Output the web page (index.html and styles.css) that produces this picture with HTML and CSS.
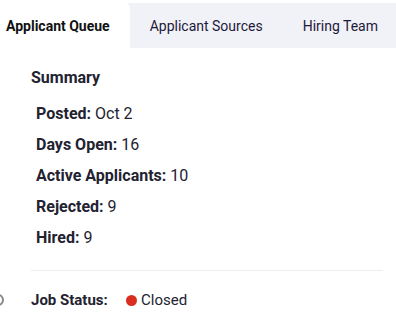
FILE: index.html
```html
<!DOCTYPE html>
<html lang="en">
<head>
    <meta charset="UTF-8">
    <title>Job Summary</title>
    <link rel="stylesheet" href="styles.css">
</head>
<body>
    <div class="tabs">
        <div class="tab active">Applicant Queue</div>
        <div class="tab">Applicant Sources</div>
        <div class="tab">Hiring Team</div>
    </div>

    <div class="panel">
        <h2 class="title">Summary</h2>
        <ul class="stats">
            <li><b>Posted:</b> Oct 2</li>
            <li><b>Days Open:</b> 16</li>
            <li><b>Active Applicants:</b> 10</li>
            <li><b>Rejected:</b> 9</li>
            <li><b>Hired:</b> 9</li>
        </ul>
        <div class="status-row">
            <span class="edge-icon"></span>
            <b class="status-label">Job Status:</b>
            <span class="status"><span class="dot"></span>Closed</span>
        </div>
    </div>
</body>
</html>
```

FILE: styles.css
```css
* {
    margin: 0;
    padding: 0;
    box-sizing: border-box;
}

body {
    font-family: Roboto, "Noto Sans", sans-serif;
    color: #222230;
    background: #fff;
    overflow: hidden;
}

.tabs {
    margin-top: 3px;
    height: 45px;
    display: flex;
    background: #f1f1f8;
    font-size: 14px;
    color: #1c1a3a;
    white-space: nowrap;
}

.tab {
    display: flex;
    align-items: center;
    padding: 0 0 0 20px;
}

.tab + .tab + .tab {
    padding-left: 40px;
}

.tab.active {
    background: #fff;
    font-weight: 700;
    color: #111;
    padding: 0 20px 0 6px;
    border-top-right-radius: 5px;
}

.panel {
    padding: 21px 13px 0 31px;
}

.title {
    font-size: 16px;
    font-weight: 700;
    line-height: 18px;
    margin-bottom: 18px;
}

.stats {
    list-style: none;
    padding-left: 5px;
    font-size: 16px;
    line-height: 18px;
    border-bottom: 1px solid #eeeeee;
    padding-bottom: 23px;
}

.stats li + li {
    margin-top: 13px;
}

.stats b {
    font-weight: 700;
}

.status-row {
    position: relative;
    display: flex;
    align-items: center;
    height: 58px;
    font-size: 15px;
}

.status-label {
    width: 95px;
}

.status {
    display: flex;
    align-items: center;
    font-size: 15px;
}

.dot {
    width: 11px;
    height: 11px;
    border-radius: 50%;
    background: #d92d20;
    margin-right: 4px;
}

.edge-icon {
    position: absolute;
    left: -39px;
    top: 23px;
    width: 12px;
    height: 12px;
    border: 2px solid #888;
    border-radius: 50%;
}
```
